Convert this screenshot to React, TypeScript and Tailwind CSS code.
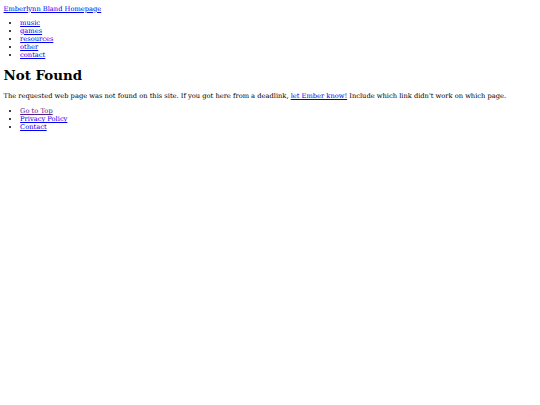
export default function App() {
  return (
    <div className="min-h-[405px] bg-white px-[3.5px] pt-[4.5px] text-[6.7px] leading-[8px] text-black [font-family:'DejaVu_Serif',serif]">
      <a href="#" className="text-[#0000ee] underline">
        Emberlynn Bland Homepage
      </a>

      <ul className="mt-[6px] list-disc pl-[16.6px]">
        <li><a href="#" className="text-[#0000ee] underline">music</a></li>
        <li><a href="#" className="text-[#0000ee] underline">games</a></li>
        <li><a href="#" className="text-[#0000ee] underline">resources</a></li>
        <li><a href="#" className="text-[#0000ee] underline">other</a></li>
        <li><a href="#" className="text-[#0000ee] underline">contact</a></li>
      </ul>

      <h1 className="mt-[7px] text-[13.4px] leading-[18px] font-bold">Not Found</h1>

      <p className="mt-[8px]">
        The requested web page was not found on this site. If you got here from a deadlink,{" "}
        <a href="#" className="text-[#0000ee] underline">let Ember know!</a> Include which link
        didn't work on which page.
      </p>

      <ul className="mt-[7.5px] list-disc pl-[16.6px]">
        <li><a href="#" className="text-[#551a8b] underline">Go to Top</a></li>
        <li><a href="#" className="text-[#0000ee] underline">Privacy Policy</a></li>
        <li><a href="#" className="text-[#0000ee] underline">Contact</a></li>
      </ul>
    </div>
  )
}
